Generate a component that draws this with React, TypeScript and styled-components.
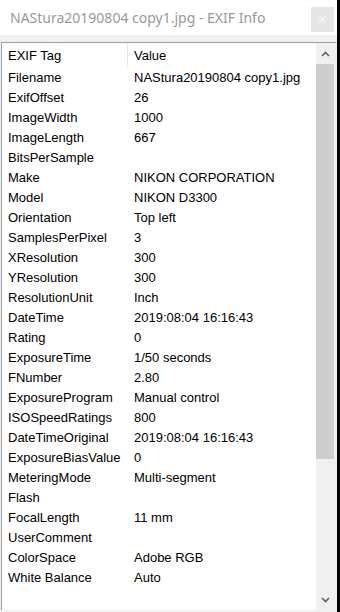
import React from 'react';
import styled, { createGlobalStyle } from 'styled-components';

const GlobalStyle = createGlobalStyle`
  html, body {
    margin: 0;
    padding: 0;
    background: #000;
  }
  body {
    font-family: 'Liberation Sans', Arial, sans-serif;
  }
`;

const rows: Array<[string, string]> = [
  ['Filename', 'NAStura20190804 copy1.jpg'],
  ['ExifOffset', '26'],
  ['ImageWidth', '1000'],
  ['ImageLength', '667'],
  ['BitsPerSample', ''],
  ['Make', 'NIKON CORPORATION'],
  ['Model', 'NIKON D3300'],
  ['Orientation', 'Top left'],
  ['SamplesPerPixel', '3'],
  ['XResolution', '300'],
  ['YResolution', '300'],
  ['ResolutionUnit', 'Inch'],
  ['DateTime', '2019:08:04 16:16:43'],
  ['Rating', '0'],
  ['ExposureTime', '1/50 seconds'],
  ['FNumber', '2.80'],
  ['ExposureProgram', 'Manual control'],
  ['ISOSpeedRatings', '800'],
  ['DateTimeOriginal', '2019:08:04 16:16:43'],
  ['ExposureBiasValue', '0'],
  ['MeteringMode', 'Multi-segment'],
  ['Flash', ''],
  ['FocalLength', '11 mm'],
  ['UserComment', ''],
  ['ColorSpace', 'Adobe RGB'],
  ['White Balance', 'Auto'],
];

const App: React.FC = () => {
  return (
    <>
      <GlobalStyle />
      <Window>
        <TitleBar>
          <Title>NAStura20190804 copy1.jpg - EXIF Info</Title>
          <CloseButton>×</CloseButton>
        </TitleBar>
        <Body>
          <ListView>
            <Table>
              <HeaderRow>
                <HeaderCell first>EXIF Tag</HeaderCell>
                <HeaderCell>Value</HeaderCell>
              </HeaderRow>
              {rows.map(([tag, value]) => (
                <Row key={tag}>
                  <TagCell>{tag}</TagCell>
                  <ValueCell>{value}</ValueCell>
                </Row>
              ))}
            </Table>
            <ScrollBar>
              <ArrowButton>
                <svg width="9" height="6" viewBox="0 0 9 6">
                  <path d="M1 5 L4.5 1.5 L8 5" fill="none" stroke="#606060" strokeWidth="1.6" />
                </svg>
              </ArrowButton>
              <Thumb />
              <Track />
              <ArrowButton>
                <svg width="9" height="6" viewBox="0 0 9 6">
                  <path d="M1 1 L4.5 4.5 L8 1" fill="none" stroke="#606060" strokeWidth="1.6" />
                </svg>
              </ArrowButton>
            </ScrollBar>
          </ListView>
        </Body>
      </Window>
    </>
  );
};
export default App;

const Window = styled.div`
  width: 337px;
  height: 612px;
  display: flex;
  flex-direction: column;
  background: #f0f0f0;
  overflow: hidden;
`;

const TitleBar = styled.div`
  height: 35px;
  display: flex;
  align-items: center;
  justify-content: space-between;
  background: #fff;
  padding: 0 3px 0 10px;
  box-sizing: border-box;
`;

const Title = styled.div`
  font-family: 'Noto Sans', 'Open Sans', sans-serif;
  font-size: 14px;
  color: #999;
  margin-top: -1px;
`;

const CloseButton = styled.div`
  width: 23px;
  height: 25px;
  margin-top: 4px;
  background: #e6e6e6;
  color: #f6f6f6;
  font-size: 16px;
  display: flex;
  align-items: center;
  justify-content: center;
`;

const Body = styled.div`
  flex: 1;
  display: flex;
  padding: 7px 0 2px 1px;
  min-height: 0;
`;

const ListView = styled.div`
  flex: 1;
  display: flex;
  background: #fff;
  border: 1px solid #a0a0a0;
  border-right-color: #f0f0f0;
  border-bottom: none;
  min-height: 0;
`;

const Table = styled.div`
  flex: 1;
  display: flex;
  flex-direction: column;
  font-size: 13px;
  color: #000;
`;

const HeaderRow = styled.div`
  height: 24px;
  display: grid;
  grid-template-columns: 126px 1fr;
  align-items: center;
`;

const HeaderCell = styled.div<{ first?: boolean }>`
  height: 100%;
  display: flex;
  align-items: center;
  padding-left: 6px;
  border-right: ${(p) => (p.first ? '1px solid #e5e5e5' : 'none')};
`;

const Row = styled.div`
  height: 20px;
  display: grid;
  grid-template-columns: 132px 1fr;
  align-items: center;
`;

const TagCell = styled.div`
  padding-left: 6px;
  white-space: nowrap;
`;

const ValueCell = styled.div`
  white-space: nowrap;
`;

const ScrollBar = styled.div`
  width: 20px;
  display: flex;
  flex-direction: column;
  background: #f0f0f0;
`;

const ArrowButton = styled.div`
  height: 21px;
  display: flex;
  align-items: center;
  justify-content: center;
  padding-right: 1px;
`;

const Thumb = styled.div`
  height: 395px;
  margin-right: 2px;
  background: #cdcdcd;
`;

const Track = styled.div`
  flex: 1;
`;
